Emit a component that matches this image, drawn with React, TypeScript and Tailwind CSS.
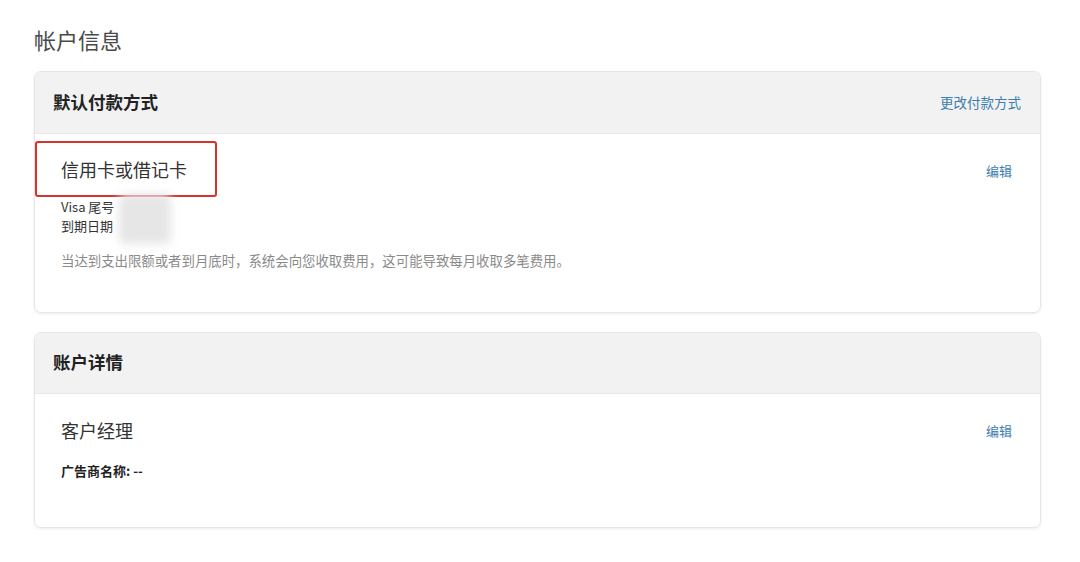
export default function App() {
  const font = { fontFamily: '"Noto Sans CJK SC", "Noto Sans", sans-serif' }
  return (
    <div className="min-h-screen bg-white" style={font}>
      <div className="w-[1007px] ml-[34px] pt-[24px]">
        <h1 className="text-[22px] leading-[30px] text-[#4a4a4a]">帐户信息</h1>

        {/* 默认付款方式 */}
        <div className="mt-[17px] rounded-[7px] border border-[#e6e6e6] shadow-[0_1px_3px_rgba(0,0,0,0.08)] overflow-hidden">
          <div className="h-[62px] bg-[#f2f2f2] border-b border-[#e8e8e8] flex items-center justify-between pl-[18px] pr-[19px]">
            <span className="text-[17.5px] leading-[24px] font-bold text-[#222] -mt-[2px]">默认付款方式</span>
            <span className="text-[13.5px] leading-[20px] text-[#3b7eaf] -mt-[2px]">更改付款方式</span>
          </div>
          <div className="h-[178px] pt-[7px]">
            <div className="flex items-center justify-between pr-[28px]">
              <div className="w-[182px] h-[56px] border-2 border-[#d8322c] rounded-[3px] flex items-center pl-[24px]">
                <span className="text-[18px] text-[#333]">信用卡或借记卡</span>
              </div>
              <span className="text-[13px] text-[#3b7eaf] mt-[4px]">编辑</span>
            </div>
            <div className="relative pl-[26px] text-[13px] leading-[19px] text-[#333]">
              <div>Visa 尾号</div>
              <div>到期日期</div>
              <div className="absolute left-[84px] top-[-3px] w-[52px] h-[50px] bg-[#e6e6e6] blur-[5px] rounded-[6px]" />
            </div>
            <div className="pl-[26px] mt-[15px] text-[13.4px] leading-[20px] text-[#8a8a8a]">
              当达到支出限额或者到月底时，系统会向您收取费用，这可能导致每月收取多笔费用。
            </div>
          </div>
        </div>

        {/* 账户详情 */}
        <div className="mt-[19px] rounded-[7px] border border-[#e6e6e6] shadow-[0_1px_3px_rgba(0,0,0,0.08)] overflow-hidden">
          <div className="h-[61px] bg-[#f2f2f2] border-b border-[#e8e8e8] flex items-center pl-[18px]">
            <span className="text-[17.5px] leading-[24px] font-bold text-[#222] -mt-[2px]">账户详情</span>
          </div>
          <div className="h-[133px] pt-[21px]">
            <div className="flex items-center justify-between pl-[26px] pr-[28px] h-[30px]">
              <span className="text-[18px] text-[#333]">客户经理</span>
              <span className="text-[13px] text-[#3b7eaf] mt-[2px]">编辑</span>
            </div>
            <div className="pl-[26px] mt-[16px] text-[13px] leading-[20px] font-bold text-[#222]">广告商名称: --</div>
          </div>
        </div>
      </div>
    </div>
  )
}
